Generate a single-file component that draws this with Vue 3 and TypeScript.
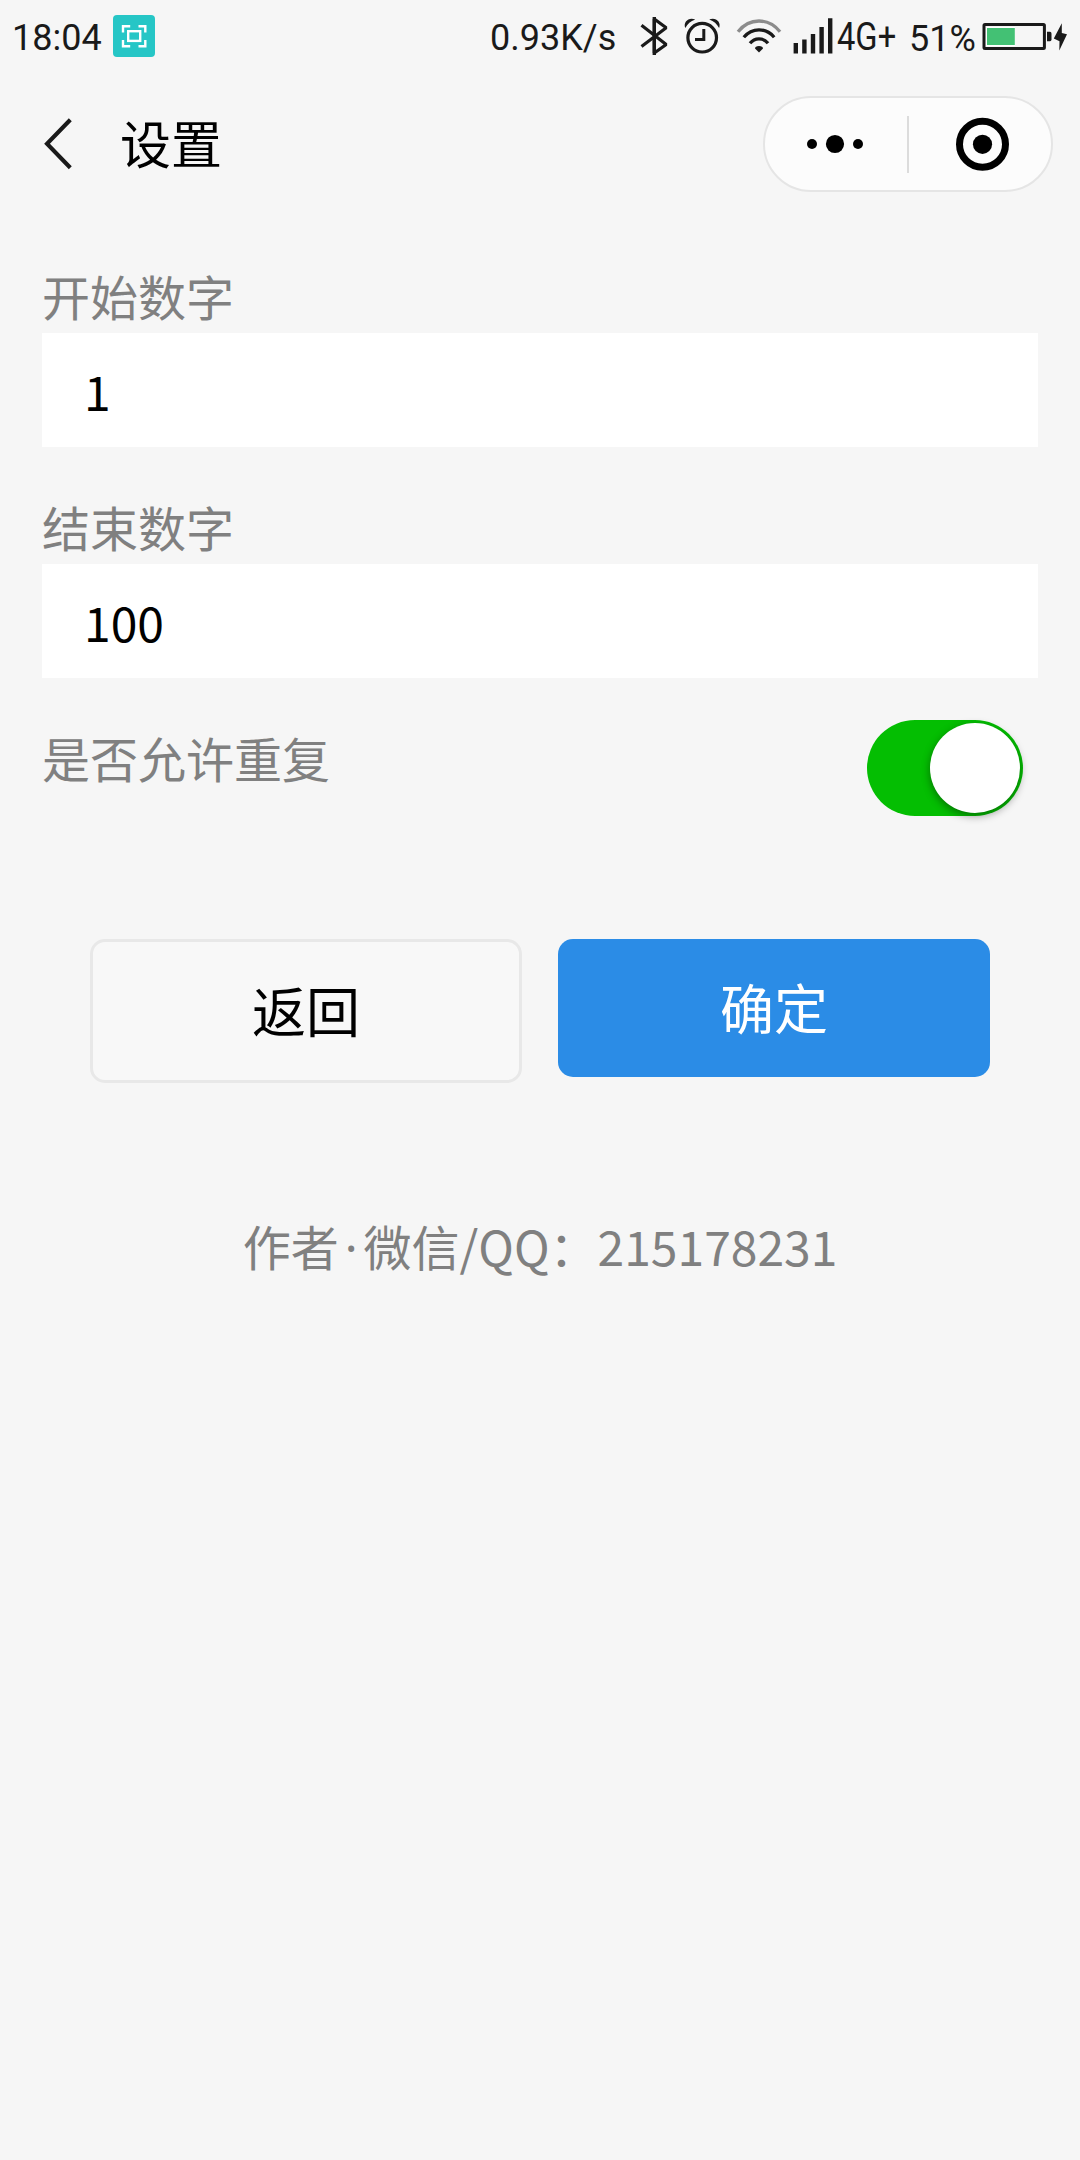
<script setup lang="ts">
import { ref } from 'vue'

interface NumberField {
  id: string
  label: string
  value: string
}

const fields = ref<NumberField[]>([
  { id: 'start', label: '开始数字', value: '1' },
  { id: 'end', label: '结束数字', value: '100' },
])
const allowRepeat = ref(true)
</script>

<template>
  <div class="screen">
    <header class="status">
      <span class="time">18:04</span>
      <svg class="shot" width="42" height="42" viewBox="0 0 42 42">
        <rect width="42" height="42" rx="4" fill="#26c6c6" />
        <g fill="none" stroke="#fff" stroke-width="2.4">
          <path d="M10 17.5v-6.3h7.2M25.5 11.2h6.8v6.3M32.300 25v6.300h-6.800M17.200 31.300h-7.200v-6.300" />
          <rect x="15.200" y="16.200" width="12" height="9.700" />
        </g>
      </svg>
      <span class="speed">0.93K/s</span>
      <svg class="bluetooth" width="36" height="80" viewBox="636 0 36 80">
        <path d="M641.500 25.300L666.200 44.500L654.300 53V19L666.200 27.800L641.500 46.500" fill="none" stroke="#1a1a1a" stroke-width="3.200" stroke-linejoin="bevel" />
        <path d="M654.300 17V55" fill="none" stroke="#1a1a1a" stroke-width="3.400" />
      </svg>
      <svg class="alarm" width="40" height="80" viewBox="682 0 40 80">
        <circle cx="702.200" cy="37.700" r="14.300" fill="none" stroke="#1a1a1a" stroke-width="3.200" />
        <path d="M703.800 29V39.500H695" fill="none" stroke="#1a1a1a" stroke-width="3" />
        <path d="M685.300 28C682.800 22 689 16.500 695.200 19.500C690.500 21 687.500 24 685.300 28ZM719.100 28C721.600 22 715.400 16.500 709.200 19.500C713.900 21 716.900 24 719.100 28Z" fill="#1a1a1a" />
      </svg>
      <svg class="wifi" width="48" height="80" viewBox="735 0 48 80">
        <g fill="none" stroke="#1a1a1a" stroke-width="3.300">
          <path d="M738 31.800Q746.500 21 759 21T780 31.800" stroke="#8c8c8c" />
          <path d="M743.800 37.200Q750 29.800 759 29.800T774.200 37.200" />
          <path d="M750 43.300Q753.500 38.800 759 38.800T768 43.300" />
        </g>
        <path d="M755 48.500Q755 46 759 46T763 48.500L759 52.500Z" fill="#1a1a1a" />
      </svg>
      <svg class="signal" width="42" height="80" viewBox="793 0 42 80" fill="#1a1a1a">
        <path d="M793.600 43h4.400v10.400h-4.400zM802.200 39.400h4.400v14h-4.400zM810.800 34h4.400v19.400h-4.400zM819.400 27h4.400v26.400h-4.400zM828 18.300h4.400v35.100h-4.400z" />
      </svg>
      <span class="network"><span class="narrow">4G+</span></span>
      <span class="percent">51%</span>
      <svg class="battery" width="90" height="80" viewBox="982 0 90 80">
        <rect x="984" y="24.500" width="60.400" height="24" rx="1" fill="none" stroke="#1a1a1a" stroke-width="3" />
        <rect x="986" y="27" width="29" height="19" fill="#fff" />
        <rect x="987" y="28" width="27.800" height="17" fill="#43c174" />
        <path d="M1047 31.700h3q1.500 0 1.500 2v5.600q0 2-1.500 2h-3z" fill="#1a1a1a" />
        <path d="M1061.800 23.300L1053.800 38.500L1059.500 41.300L1059.300 50.600L1067 34.200L1061.800 33Z" fill="#1a1a1a" />
      </svg>
    </header>

    <nav class="nav">
      <svg class="back" width="40" height="60" viewBox="40 114 40 60">
        <path d="M70.300 119.700L47 143.700L70.300 167.700" fill="none" stroke="#1a1a1a" stroke-width="4.100" />
      </svg>
      <h1 class="title">设置</h1>
      <div class="capsule">
        <svg class="more" width="56" height="20" viewBox="0 0 56 20">
          <circle cx="5" cy="10" r="5" /><circle cx="28" cy="10" r="9.100" /><circle cx="51" cy="10" r="5" />
        </svg>
        <i class="divider"></i>
        <svg class="close" width="54" height="54" viewBox="0 0 54 54">
          <circle cx="26.500" cy="27.300" r="23" fill="none" stroke="#000" stroke-width="7" />
          <circle cx="26.500" cy="27.300" r="9.600" />
        </svg>
      </div>
    </nav>

    <main class="form">
      <div v-for="field in fields" :key="field.id" class="field">
        <label class="label" :for="field.id">{{ field.label }}</label>
        <input :id="field.id" v-model="field.value" class="input" type="text" />
      </div>
      <div class="row">
        <span class="label">是否允许重复</span>
        <div class="switch" :class="{ on: allowRepeat }" role="switch" :aria-checked="allowRepeat" @click="allowRepeat = !allowRepeat">
          <i class="knob"></i>
        </div>
      </div>
      <div class="actions">
        <button class="btn plain" type="button">返回</button>
        <button class="btn primary" type="button">确定</button>
      </div>
      <p class="author">作者<span class="dot">·</span>微信/QQ：215178231</p>
    </main>
  </div>
</template>

<style>
html, body { margin: 0; background: #f6f6f6; }
</style>

<style scoped>
.screen {
  width: 1080px;
  height: 2160px;
  overflow: hidden;
  background: #f6f6f6;
  color: #000;
  font-family: "Noto Sans CJK SC", sans-serif;
}
.screen svg { display: block; flex: none; }
.status {
  display: flex;
  height: 80px;
  color: #1a1a1a;
  font: 36px/76px Roboto, sans-serif;
  white-space: nowrap;
}
.time { width: 101px; margin-left: 12px; }
.shot { margin-top: 15px; }
.speed { width: 146px; margin-left: 335px; }
.alarm { margin-left: 10px; }
.wifi { margin-left: 13px; }
.signal { margin-left: 10px; }
.network { width: 72px; margin-left: 2px; font-size: 38px; line-height: 74px; }
.narrow { display: inline-block; transform: scaleX(.86); transform-origin: 0 50%; }
.percent { width: 73px; line-height: 78px; }
.nav { display: flex; align-items: center; height: 128px; }
.back { margin-left: 40px; }
.title { margin: -4px 0 0 40px; font-size: 51px; font-weight: 400; line-height: 74px; }
.capsule {
  box-sizing: border-box;
  display: flex;
  align-items: center;
  width: 290px;
  height: 96px;
  margin: 0 27px 0 auto;
  border: 2px solid #e5e5e5;
  border-radius: 48px;
  background: #fcfcfc;
}
.more { margin-left: 42px; }
.divider { width: 2px; height: 57px; margin-left: 44px; background: #dcdcdc; }
.close { margin-left: 47px; }
.form { padding: 54px 42px 0; }
.field { height: 231px; }
.label { display: block; height: 71px; color: #808080; font-size: 48px; line-height: 67px; }
.input {
  box-sizing: border-box;
  display: block;
  width: 100%;
  height: 114px;
  padding: 0 42px;
  border: 0;
  border-radius: 0;
  outline: 0;
  background: #fff;
  color: #000;
  font: 48px "Noto Sans CJK SC", sans-serif;
}
.row { display: flex; justify-content: space-between; }
.switch {
  box-sizing: border-box;
  width: 156px;
  height: 96px;
  margin: -4px 15px 0 0;
  padding: 3px;
  border-radius: 48px;
  background: #dfdfdf;
}
.switch.on { display: flex; justify-content: flex-end; background: #04be02; }
.knob {
  display: block;
  width: 90px;
  height: 90px;
  border-radius: 50%;
  background: #fff;
  box-shadow: 0 3px 9px rgba(0, 0, 0, .4);
}
.actions { display: flex; align-items: flex-start; justify-content: space-between; margin: 123px 48px 0; }
.btn {
  box-sizing: border-box;
  width: 432px;
  height: 138px;
  padding: 0 0 3px;
  border: 0;
  border-radius: 15px;
  font: 54px/135px "Noto Sans CJK SC", sans-serif;
}
.plain { height: 144px; border: 3px solid #e8e8e8; background: #f8f8f8; color: #000; }
.primary { background: #2b8ce6; color: #fff; }
.author { margin: 127px 0 0; color: #808080; font-size: 48px; line-height: 71px; text-align: center; }
.dot { padding: 0 6px; font-family: "Noto Sans", sans-serif; }
</style>
